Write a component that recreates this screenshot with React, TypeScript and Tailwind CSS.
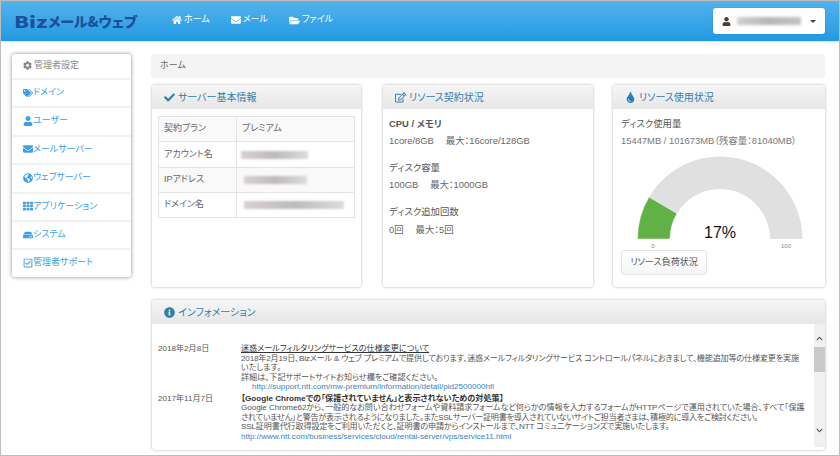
import {
  FaCheck,
  FaChevronDown,
  FaChevronUp,
  FaCog,
  FaEnvelope,
  FaFolderOpen,
  FaGlobeAmericas,
  FaHdd,
  FaHome,
  FaInfoCircle,
  FaRegCheckSquare,
  FaRegEdit,
  FaTags,
  FaTh,
  FaTint,
  FaUser,
} from 'react-icons/fa';
import type { ReactNode } from 'react';

const sideItems = [
  { icon: <FaTags />, label: 'ドメイン' },
  { icon: <FaUser />, label: 'ユーザー' },
  { icon: <FaEnvelope />, label: 'メールサーバー' },
  { icon: <FaGlobeAmericas />, label: 'ウェブサーバー' },
  { icon: <FaTh />, label: 'アプリケーション' },
  { icon: <FaHdd />, label: 'システム' },
  { icon: <FaRegCheckSquare />, label: '管理者サポート' },
];

function Panel({
  icon,
  title,
  className,
  children,
}: {
  icon: ReactNode;
  title: string;
  className: string;
  children: ReactNode;
}) {
  return (
    <div className={`flex flex-col rounded-[3px] bg-white shadow-[0_0_3px_rgba(0,0,0,0.3)] ${className}`}>
      <div className="flex h-[24px] shrink-0 items-center gap-[3px] rounded-t-[3px] bg-gradient-to-b from-[#f6f6f6] to-[#e6e6e6] pl-[12px] text-[10px] text-[#2f7fb0]">
        <span className="text-[11px]">{icon}</span>
        <span>{title}</span>
      </div>
      {children}
    </div>
  );
}

function Blur({ w, ml }: { w: string; ml: string }) {
  return <div className={`h-[8px] ${w} ${ml} bg-gradient-to-r from-[#d8d2cf] via-[#bdb9bd] to-[#dedbd8] blur-[1px]`} />;
}

function Gauge() {
  return (
    <svg width="190" height="95" viewBox="0 0 190 95" className="block">
      {/* center at 100,84 */}
      <path d="M17.5 84 A82.5 82.5 0 0 1 182.5 84 L150 84 A50 50 0 0 0 50 84 Z" fill="#e0e0e0" />
      <path d="M17.5 84 A82.5 82.5 0 0 1 29 42 L57 58.5 A50 50 0 0 0 50 84 Z" fill="#62b146" stroke="#fff" strokeWidth="0.5" />
      <text x="100" y="83" textAnchor="middle" fontSize="16" fill="#111" fontFamily="Liberation Sans">17%</text>
      <text x="33" y="93" textAnchor="middle" fontSize="6" fill="#888" fontFamily="Liberation Sans">0</text>
      <text x="166" y="93" textAnchor="middle" fontSize="6" fill="#888" fontFamily="Liberation Sans">100</text>
    </svg>
  );
}

export default function App() {
  return (
    <div className="h-[456px] w-[840px] overflow-hidden border border-[#bdbdbd] bg-white font-['Liberation_Sans','Noto_Sans_CJK_JP',sans-serif] text-[9px] text-[#555] [font-feature-settings:'palt']">
      <header className="flex h-[40px] items-center justify-between bg-gradient-to-b from-[#52b2ec] to-[#1e9ae3] pl-[13px] pr-[14px] shadow-[0_1px_1px_rgba(0,0,0,0.1)]">
        <div className="flex items-center">
          <span className="flex w-[158px] items-center font-['Noto_Sans_CJK_JP',sans-serif] font-black leading-none text-[#1c4f9c]">
            <span className="w-[34px] origin-left scale-x-[1.35] text-[16px]">Biz</span>
            <span className="text-[14px]">メール&amp;ウェブ</span>
          </span>
          <nav className="-mt-[2px] flex gap-[21px] text-white">
            <span className="flex items-center gap-[2px]"><FaHome className="text-[10px]" />ホーム</span>
            <span className="flex items-center gap-[2px]"><FaEnvelope className="text-[10px]" />メール</span>
            <span className="flex items-center gap-[2px]"><FaFolderOpen className="text-[11px]" />ファイル</span>
          </nav>
        </div>
        <div className="flex h-[26px] w-[112px] items-center rounded-[3px] bg-white pl-[9px] shadow-[0_0_2px_rgba(0,0,0,0.2)]">
          <FaUser className="text-[9px] text-[#4a3d33]" />
          <div className="ml-[6px] h-[8px] w-[64px] bg-gradient-to-r from-[#cfcfcf] via-[#b8b4b4] to-[#c4c4c4] blur-[1.5px]" />
          <span className="ml-[9px] h-0 w-0 border-x-[3px] border-t-[3px] border-x-transparent border-t-[#444]" />
        </div>
      </header>

      <div className="flex gap-[21px] pl-[11px] pt-[13px]">
        <aside className="h-[223px] w-[119px] shrink-0 rounded-[3px] bg-white shadow-[0_0_4px_rgba(0,0,0,0.45)]">
          <div className="flex h-[24px] items-center gap-[2px] pb-[1px] pl-[11px] text-[#888]">
            <FaCog className="text-[9px]" />管理者設定
          </div>
          {sideItems.map((item) => (
            <div key={item.label} className="flex h-[28.4px] items-center border-t-2 border-[#f2f2f2] pb-[1px] pl-[11px] text-[#3ca0e6]">
              <span className="text-[10px]">{item.icon}</span>
              {item.label}
            </div>
          ))}
        </aside>

        <main className="w-[674px]">
          <div className="-ml-[1px] flex h-[24px] w-[674px] items-center rounded-[3px] bg-[#f4f4f4] pl-[9px] text-[#666]">ホーム</div>

          <div className="mt-[7px] flex h-[202px]">
            <Panel icon={<FaCheck />} title="サーバー基本情報" className="w-[209px]">
              <div className="px-[6px] pt-[7px]">
                <table className="w-[197px] table-fixed border-collapse text-[#666]">
                  <tbody>
                    <tr className="h-[25px] bg-[#f9f9f9]">
                      <td className="w-[78px] border border-[#e4e4e4] pl-[5px]">契約プラン</td>
                      <td className="border border-[#e4e4e4] pl-[5px]">プレミアム</td>
                    </tr>
                    <tr className="h-[26px]">
                      <td className="border border-[#e4e4e4] pl-[5px]">アカウント名</td>
                      <td className="border border-[#e4e4e4]"><Blur w="w-[67px]" ml="ml-[4px]" /></td>
                    </tr>
                    <tr className="h-[25px] bg-[#f9f9f9]">
                      <td className="border border-[#e4e4e4] pl-[5px]">IPアドレス</td>
                      <td className="border border-[#e4e4e4]"><Blur w="w-[63px]" ml="ml-[7px]" /></td>
                    </tr>
                    <tr className="h-[25px]">
                      <td className="border border-[#e4e4e4] pl-[5px]">ドメイン名</td>
                      <td className="border border-[#e4e4e4]"><Blur w="w-[100px]" ml="ml-[7px]" /></td>
                    </tr>
                  </tbody>
                </table>
              </div>
            </Panel>

            <Panel icon={<FaRegEdit />} title="リソース契約状況" className="ml-[22px] w-[210px]">
              <div className="px-[6px] pt-[8px] text-[9.4px] text-[#666]">
                <p className="font-bold leading-[14px] text-[#555]">CPU / メモリ</p>
                <p className="mt-[3px] leading-[14px]">1core/8GB　 最大：16core/128GB</p>
                <p className="mt-[13px] leading-[14px] text-[#555]">ディスク容量</p>
                <p className="mt-[3px] leading-[14px]">100GB　 最大：1000GB</p>
                <p className="mt-[13px] leading-[14px] text-[#555]">ディスク追加回数</p>
                <p className="mt-[4px] leading-[14px]">0回　 最大：5回</p>
              </div>
            </Panel>

            <Panel icon={<FaTint />} title="リソース使用状況" className="ml-[20px] w-[212px]">
              <div className="px-[8px] pt-[8px] text-[9.4px] text-[#666]">
                <p className="leading-[14px] text-[#555]">ディスク使用量</p>
                <p className="mt-[3px] leading-[14px] text-[#777]">15447MB / 101673MB（残容量：81040MB）</p>
                <div className="-ml-[1px] mt-[7px]"><Gauge /></div>
                <button className="block h-[25px] w-[86px] rounded-[3px] border border-[#e6e6e6] bg-gradient-to-b from-white to-[#f6f6f6] text-[9px] text-[#555]">リソース負荷状況</button>
              </div>
            </Panel>
          </div>

          <div className="mt-[13px]">
            <Panel icon={<FaInfoCircle />} title="インフォメーション" className="h-[150px] w-[673px]">
              <div className="flex min-h-0 flex-1">
                <div className="min-w-0 flex-1 overflow-hidden whitespace-nowrap pl-[6px] pt-[20px] text-[8.1px] leading-[9.5px] text-[#555]">
                  <div className="flex">
                    <span className="w-[83px] shrink-0">2018年2月8日</span>
                    <div>
                      <p className="text-[#333] underline">迷惑メールフィルタリングサービスの仕様変更について</p>
                      <p className="tracking-[-0.17px]">2018年2月19日、Bizメール &amp; ウェブ プレミアムで提供しております、迷惑メールフィルタリングサービス コントロールパネルにおきまして、機能追加等の仕様変更を実施</p>
                      <p>いたします。</p>
                      <p>詳細は、下記サポートサイトお知らせ欄をご確認ください。</p>
                      <p className="pl-[11px] text-[#3b82c4]">http://support.ntt.com/mw-premium/information/detail/pid2500000hfi</p>
                    </div>
                  </div>
                  <div className="mt-[2px] flex">
                    <span className="w-[83px] shrink-0">2017年11月7日</span>
                    <div>
                      <p className="font-bold text-[#333]">【Google Chromeでの「保護されていません」と表示されないための対処策】</p>
                      <p className="tracking-[-0.05px]">Google Chrome62から、一般的なお問い合わせフォームや資料請求フォームなど何らかの情報を入力するフォームがHTTPページで運用されていた場合、すべて「保護</p>
                      <p className="tracking-[-0.25px]">されていません」と警告が表示されるようになりました。またSSLサーバー証明書を導入されていないサイトご担当者さまは、積極的に導入をご検討ください。</p>
                      <p className="tracking-[-0.15px]">SSL証明書代行取得設定をご利用いただくと、証明書の申請からインストールまで、NTT コミュニケーションズで実施いたします。</p>
                      <p className="text-[#3b82c4]">http://www.ntt.com/business/services/cloud/rental-server/vps/service11.html</p>
                    </div>
                  </div>
                </div>
                <div className="mb-[3px] flex w-[11px] shrink-0 flex-col items-center bg-[#f1f1f1] pt-[11px] text-[7px] text-[#555]">
                  <FaChevronUp />
                  <div className="mt-[5px] h-[25px] w-full bg-[#c9c9c9]" />
                  <FaChevronDown className="mt-[55px]" />
                </div>
              </div>
            </Panel>
          </div>
        </main>
      </div>
    </div>
  );
}
